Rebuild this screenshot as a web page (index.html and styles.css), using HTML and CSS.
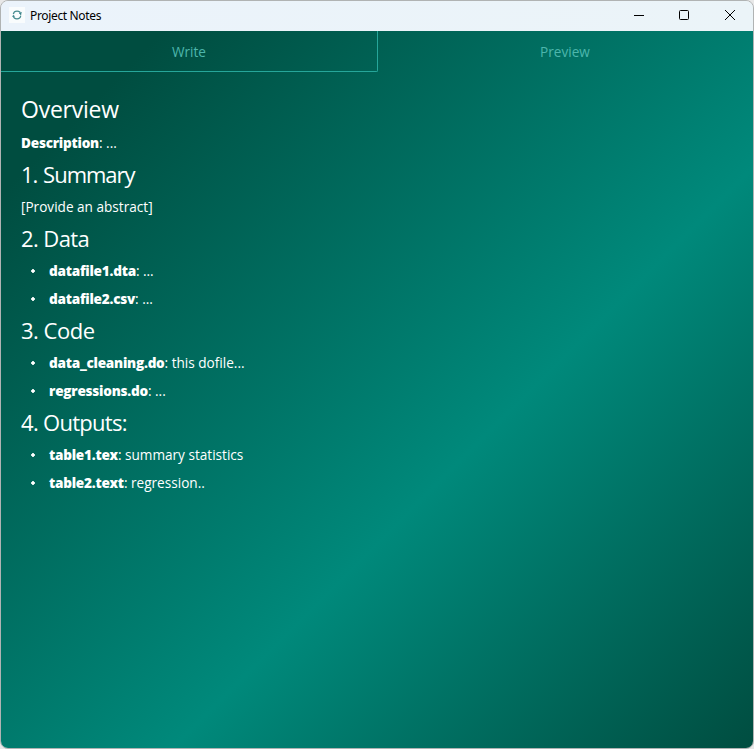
FILE: index.html
```html
<!DOCTYPE html>
<html lang="en">
<head>
<meta charset="utf-8">
<title>Project Notes</title>
<link rel="stylesheet" href="styles.css">
</head>
<body>
<div class="window">
  <header class="titlebar">
    <span class="app-icon"><svg width="16" height="16" viewBox="0 0 16 16" fill="none" stroke-width="1.2"><circle cx="8" cy="8" r="3.8" stroke="#468b8f" stroke-dasharray="10.6 1.34" stroke-dashoffset="-0.6"/><path d="M12.5 5.4l-.8 1.4-1.5-.5M3.6 9.6l.9-.9 1.1.7" stroke="#35818a" stroke-width="1"/></svg></span>
    <span class="title">Project Notes</span>
    <div class="controls">
      <svg width="46" height="30" viewBox="0 0 46 30"><path d="M18 14.5h10" stroke="#000"/></svg>
      <svg width="46" height="30" viewBox="0 0 46 30"><rect x="17.5" y="9.5" width="9" height="9" rx="1" fill="none" stroke="#000"/></svg>
      <svg width="46" height="30" viewBox="0 0 46 30"><path d="M17 9l10 10M27 9l-10 10" stroke="#000"/></svg>
    </div>
  </header>
  <main class="content">
    <nav class="tabs">
      <div class="tab active">Write</div>
      <div class="tab">Preview</div>
    </nav>
    <article class="notes">
      <h2 class="h-overview">Overview</h2>
      <p><b>Description</b>: ...</p>
      <h2 class="h-summary">1. Summary</h2>
      <p>[Provide an abstract]</p>
      <h2 class="h-data">2. Data</h2>
      <ul>
        <li><b>datafile1.dta</b>: ...</li>
        <li><b>datafile2.csv</b>: ...</li>
      </ul>
      <h2 class="h-code">3. Code</h2>
      <ul>
        <li><b>data_cleaning.do</b>: this dofile...</li>
        <li><b>regressions.do</b>: ...</li>
      </ul>
      <h2 class="h-out">4. Outputs:</h2>
      <ul>
        <li><b>table1.tex</b>: summary statistics</li>
        <li><b>table2.text</b>: regression..</li>
      </ul>
    </article>
  </main>
</div>
</body>
</html>
```
FILE: styles.css
```css
* { box-sizing: border-box; }
body { margin: 0; background: #e8e8e8; font-family: "Open Sans", "Noto Sans", sans-serif; }
.window { width: 754px; height: 749px; display: flex; flex-direction: column; border: 1px solid #b0b3b3; border-radius: 8px; overflow: hidden; }
.titlebar { height: 30px; flex: none; display: flex; align-items: center; background: linear-gradient(100deg, #ebf3fb, #ebf4f8); color: #000; }
.app-icon { width: 16px; height: 16px; margin-left: 8px; margin-top: -2px; background: #f9fcfd; }
.app-icon svg, .controls svg { display: block; }
.title { margin-left: 5px; font-family: "Noto Sans", sans-serif; font-size: 12px; line-height: 30px; letter-spacing: -0.34px; }
.controls { display: flex; margin-left: auto; margin-right: -1px; }
.content { flex: 1; color: #fff; background: linear-gradient(135deg, #004d40 11%, #00897b 60.5%, #004d40 100%); }
.tabs { display: flex; height: 41px; }
.tab { flex: 1; text-align: center; font-size: 13.6px; line-height: 42px; color: #4db6ac; border: 1px solid transparent; border-top: 0; border-left: 0; }
.tab.active { border-color: #26a69a; flex: 0 0 377px; border-bottom-right-radius: 2px; }
.notes { padding: 21px 20px; font-size: 13.6px; line-height: 20px; }
h2 { margin: 0; font-size: 22px; font-weight: 400; line-height: 34px; height: 36px; white-space: nowrap; }
p { margin: 0; height: 28px; line-height: 28px; white-space: nowrap; }
ul { list-style: none; margin: 0; padding: 0; }
li { height: 28px; line-height: 28px; padding-left: 28px; white-space: pre; background: radial-gradient(circle at 12px 14px, #fff 1.5px, transparent 2px); }
b { font-weight: 800; letter-spacing: -0.25px; }
.h-overview { line-height: 32px; font-size: 23px; letter-spacing: -0.25px; }
.h-summary { letter-spacing: -1px; word-spacing: 1px; }
.h-data { letter-spacing: -0.6px; }
.h-code { letter-spacing: -0.5px; }
.h-out { letter-spacing: -0.7px; }
```
